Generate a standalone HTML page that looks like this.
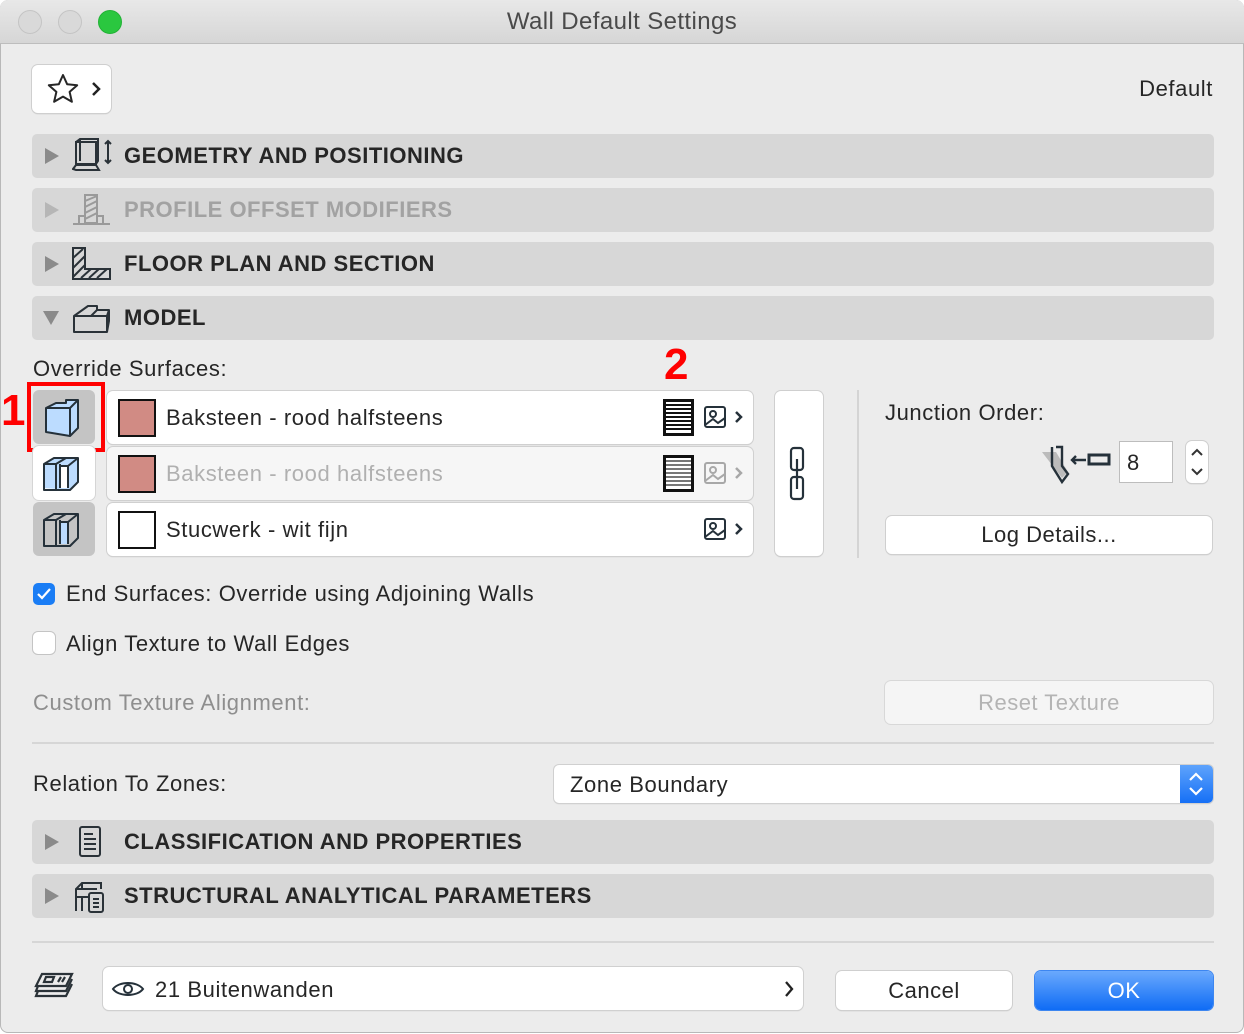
<!DOCTYPE html>
<html><head><meta charset="utf-8"><style>
*{box-sizing:border-box;margin:0;padding:0}
body{width:1244px;height:1034px;background:#fff;font-family:"Liberation Sans",sans-serif;color:#262626;position:relative;overflow:hidden}
.win{position:absolute;left:0;top:0;width:1244px;height:1033px;background:#ececec;box-shadow:inset 0 0 0 1px #b8b8b8;border-radius:8px;overflow:hidden}
.title{position:absolute;left:0;top:0;width:100%;height:44px;background:linear-gradient(#e8e8e8,#d6d6d6);border-bottom:1px solid #bdbdbd;text-align:center;font-size:24px;letter-spacing:.4px;line-height:44px;color:#4a4a4a}
.dot{position:absolute;top:10px;width:24px;height:24px;border-radius:50%;background:#d9d9d9;border:1px solid #c4c4c4}
.a{position:absolute}
.bar{position:absolute;left:32px;width:1182px;height:44px;background:#d7d7d7;border-radius:5px}
.bar .tri{position:absolute;left:13px;top:14px;width:0;height:0;border-left:14px solid #8a8a8a;border-top:8px solid transparent;border-bottom:8px solid transparent}
.bar .t{position:absolute;left:92px;top:0;line-height:44px;font-weight:bold;font-size:22px;letter-spacing:.5px;color:#262626}
.bar svg{position:absolute;left:40px;top:3px}
.txt{position:absolute;font-size:22px;letter-spacing:.6px;white-space:nowrap}
.field{position:absolute;background:#fff;border-radius:6px;box-shadow:0 0 0 1px #d0d0d0,0 1px 1px #bdbdbd}
.sw{position:absolute;left:11px;top:8px;width:38px;height:38px;border:2px solid #111}
.btn{position:absolute;background:#fff;border-radius:6px;box-shadow:0 0 0 1px #cfcfcf,0 1px 1px #b0b0b0;text-align:center;font-size:22px;letter-spacing:.5px}
</style></head><body>
<div class="win">
<div class="title">Wall Default Settings
<div class="dot" style="left:18px"></div><div class="dot" style="left:58px"></div><div class="dot" style="left:98px;background:#2ac73f;border-color:#22b236"></div></div>

<div class="btn" style="left:32px;top:65px;width:79px;height:48px">
<svg class="a" style="left:14px;top:7px" width="34" height="34" viewBox="0 0 34 34"><path d="M17 3l4.2 9.3 10 .9-7.6 6.7 2.3 9.9L17 24.6 8.1 29.8l2.3-9.9-7.6-6.7 10-.9z" fill="none" stroke="#262626" stroke-width="2" stroke-linejoin="round"/></svg>
<svg class="a" style="left:58px;top:16px" width="12" height="16"><path d="M3 2l6 6-6 6" fill="none" stroke="#222" stroke-width="2.5"/></svg></div>
<div class="txt" style="right:31px;top:76px">Default</div>

<div class="bar" style="top:134px"><div class="tri"></div>
<svg width="40" height="38"><g fill="none" stroke="#2a3238" stroke-width="2"><rect x="4" y="5" width="20" height="22"/><path d="M4 5l4-3h18v22l-2 3M8 2v22"/><path d="M1 32l3-4h20l3 5H4z"/><path d="M36 4v22M33 7l3-3 3 3M33 23l3 3 3-3"/></g></svg>
<div class="t">GEOMETRY AND POSITIONING</div></div>

<div class="bar" style="top:188px"><div class="tri" style="border-left-color:#b6b6b6"></div>
<svg width="40" height="38"><g fill="none" stroke="#9a9a9a" stroke-width="2"><rect x="13" y="4" width="12" height="28"/><path d="M13 10l12-5M13 16l12-6M13 22l12-6M13 28l12-6"/><path d="M7 32v-7h6M25 25h6v7M1 33h37"/></g></svg>
<div class="t" style="color:#a2a2a2">PROFILE OFFSET MODIFIERS</div></div>

<div class="bar" style="top:242px"><div class="tri"></div>
<svg width="40" height="38"><g fill="none" stroke="#2a3238" stroke-width="2"><path d="M1 3h12v21h25v10H1z"/><path d="M1 13l10-9M1 23l12-12M1 32l12-12M9 33l10-9M17 33l10-9M25 33l10-9"/></g></svg>
<div class="t">FLOOR PLAN AND SECTION</div></div>

<div class="bar" style="top:296px"><div style="position:absolute;left:11px;top:15px;border-top:14px solid #8a8a8a;border-left:8px solid transparent;border-right:8px solid transparent"></div>
<svg width="40" height="38"><g fill="none" stroke="#2a3238" stroke-width="2" stroke-linejoin="round"><path d="M2 17l14-10h9v4h12v11L35 33H2zM2 17h33v16M35 17l2-6M25 11l-6 6"/></g></svg>
<div class="t">MODEL</div></div>

<div class="txt" style="left:33px;top:356px">Override Surfaces:</div>
<div class="a" style="left:664px;top:340px;color:#ff0000;font-weight:bold;font-size:44px">2</div>
<div class="a" style="left:1px;top:386px;color:#ff0000;font-weight:bold;font-size:44px">1</div>

<div class="a" style="left:33px;top:390px;width:62px;height:54px;background:#c4c4c4;border-radius:6px"></div>
<div class="a" style="left:27px;top:382px;width:78px;height:70px;border:4px solid #ff0000"></div>
<svg class="a" style="left:42px;top:398px" width="44" height="40"><path d="M4 10l10-5h10v-3h12v28l-8 8L4 34z" fill="#bcdcff"/><g fill="none" stroke="#25313a" stroke-width="2" stroke-linejoin="round"><path d="M4 10l10-5h10v-3h12v28l-8 8L4 34z"/><path d="M4 10h24v28M28 10l8-8"/></g></svg>
<div class="a" style="left:33px;top:446px;width:62px;height:54px;background:#fff;border-radius:6px;box-shadow:0 0 0 1px #d5d5d5"></div>
<svg class="a" style="left:42px;top:452px" width="44" height="42"><path d="M2 12l10-6h24v24l-8 8-26-2z" fill="#bcdcff"/><path d="M18 14h8v22h-8z" fill="#fff"/><g fill="none" stroke="#25313a" stroke-width="2" stroke-linejoin="round"><path d="M2 12l10-6h24v24l-8 8H2z"/><path d="M2 12h12v26M14 12l10-6M18 12v24M18 14h8v22M26 14l10-8"/></g></svg>
<div class="a" style="left:33px;top:502px;width:62px;height:54px;background:#c4c4c4;border-radius:6px"></div>
<svg class="a" style="left:42px;top:508px" width="44" height="42"><path d="M18 14h8v22h-8z" fill="#bcdcff"/><g fill="none" stroke="#25313a" stroke-width="2" stroke-linejoin="round"><path d="M2 12l10-6h24v24l-8 8H2z"/><path d="M2 12h12v26M14 12l10-6M18 12v24M18 14h8v22M26 14l10-8"/></g></svg>

<div class="field" style="left:107px;top:391px;width:646px;height:53px"><div class="sw" style="background:#d18b84"></div><div class="txt" style="left:59px;top:14px">Baksteen - rood halfsteens</div>
<svg class="a" style="left:556px;top:8px" width="90" height="38"><rect x="1.5" y="1.5" width="28" height="34" fill="#fff" stroke="#111" stroke-width="3"/><path d="M3 6h25M3 10h25M3 14h25M3 18h25M3 22h25M3 26h25M3 30h25" stroke="#111" stroke-width="2"/><g fill="none" stroke="#25313a" stroke-width="2"><rect x="42" y="8" width="20" height="20" rx="2"/><circle cx="50" cy="15" r="3"/><path d="M42 26l8-6 5 4 7-5"/><path d="M73 13l5 5-5 5" stroke-width="2.5"/></g></svg></div>
<div class="field" style="left:107px;top:447px;width:646px;height:53px;background:#f6f6f6"><div class="sw" style="background:#d18b84"></div><div class="txt" style="left:59px;top:14px;color:#b0b0b0">Baksteen - rood halfsteens</div>
<svg class="a" style="left:556px;top:8px" width="90" height="38"><rect x="1.5" y="1.5" width="28" height="34" fill="#fff" stroke="#111" stroke-width="3"/><path d="M3 6h25M3 10h25M3 14h25M3 18h25M3 22h25M3 26h25M3 30h25" stroke="#777" stroke-width="2"/><g fill="none" stroke="#a8a8a8" stroke-width="2"><rect x="42" y="8" width="20" height="20" rx="2"/><circle cx="50" cy="15" r="3"/><path d="M42 26l8-6 5 4 7-5"/><path d="M73 13l5 5-5 5" stroke-width="2.5"/></g></svg></div>
<div class="field" style="left:107px;top:503px;width:646px;height:53px"><div class="sw" style="background:#fff"></div><div class="txt" style="left:59px;top:14px">Stucwerk - wit fijn</div>
<svg class="a" style="left:556px;top:8px" width="90" height="38"><g fill="none" stroke="#25313a" stroke-width="2"><rect x="42" y="8" width="20" height="20" rx="2"/><circle cx="50" cy="15" r="3"/><path d="M42 26l8-6 5 4 7-5"/><path d="M73 13l5 5-5 5" stroke-width="2.5"/></g></svg></div>

<div class="btn" style="left:775px;top:391px;width:48px;height:165px">
<svg class="a" style="left:13px;top:54px" width="22" height="58"><g fill="none" stroke="#25313a" stroke-width="2.2"><rect x="3" y="3" width="12" height="22" rx="3"/><rect x="3" y="32" width="12" height="22" rx="3"/><path d="M9 14v30"/></g></svg></div>
<div class="a" style="left:857px;top:390px;width:2px;height:168px;background:#d4d4d4"></div>

<div class="txt" style="left:885px;top:400px">Junction Order:</div>
<svg class="a" style="left:1040px;top:444px" width="72" height="44"><path d="M2 8h14l12 20-6 6z" fill="#bbb"/><g fill="none" stroke="#25313a" stroke-width="2.4"><path d="M16 3h6v19l6 8-6 8-10-16V3"/><path d="M46 16H32M36 12l-4 4 4 4"/></g><rect x="49" y="11" width="20" height="9" fill="none" stroke="#25313a" stroke-width="3"/></svg>
<div class="a" style="left:1119px;top:441px;width:54px;height:42px;background:#fff;border:1px solid #bdbdbd;font-size:22px;padding:8px 0 0 7px">8</div>
<div class="btn" style="left:1186px;top:441px;width:22px;height:42px"><svg class="a" style="left:4px;top:7px" width="14" height="28"><path d="M2 7l5-5 5 5M2 21l5 5 5-5" fill="none" stroke="#333" stroke-width="2"/></svg></div>

<div class="btn" style="left:886px;top:516px;width:326px;height:38px;line-height:38px">Log Details...</div>

<div class="a" style="left:33px;top:583px;width:22px;height:22px;background:#1a7df5;border-radius:5px"><svg width="22" height="22"><path d="M5 11l4 4 8-9" fill="none" stroke="#fff" stroke-width="2.2"/></svg></div>
<div class="txt" style="left:66px;top:581px">End Surfaces: Override using Adjoining Walls</div>
<div class="a" style="left:33px;top:632px;width:22px;height:22px;background:#fff;border-radius:5px;box-shadow:0 0 0 1px #c4c4c4"></div>
<div class="txt" style="left:66px;top:631px">Align Texture to Wall Edges</div>

<div class="txt" style="left:33px;top:690px;color:#8e8e8e">Custom Texture Alignment:</div>
<div class="btn" style="left:885px;top:681px;width:328px;height:43px;line-height:43px;background:#f5f5f5;color:#b4b4b4;box-shadow:0 0 0 1px #d8d8d8">Reset Texture</div>

<div class="a" style="left:32px;top:742px;width:1182px;height:2px;background:#d6d6d6"></div>
<div class="txt" style="left:33px;top:771px">Relation To Zones:</div>
<div class="field" style="left:554px;top:765px;width:659px;height:38px;border-radius:5px;overflow:hidden"><div class="txt" style="left:16px;top:7px">Zone Boundary</div>
<div class="a" style="right:0;top:0;width:33px;height:38px;background:linear-gradient(#5ea3fc,#1670f6)"><svg width="33" height="38"><path d="M10 15l6-6 6 6M10 23l6 6 6-6" fill="none" stroke="#fff" stroke-width="2.2"/></svg></div></div>

<div class="bar" style="top:820px"><div class="tri"></div>
<svg width="40" height="38"><g fill="none" stroke="#2a3238" stroke-width="2"><rect x="8" y="4" width="20" height="29" rx="2"/><path d="M12 11h9M12 16h12M12 21h12M12 26h12"/></g></svg>
<div class="t">CLASSIFICATION AND PROPERTIES</div></div>
<div class="bar" style="top:874px"><div class="tri"></div>
<svg width="40" height="38"><g fill="none" stroke="#2a3238" stroke-width="2"><path d="M4 34V12l6-6h19v6M4 12h21M10 6v6M4 20h12M10 20v14"/><rect x="17" y="16" width="14" height="19" rx="2"/><path d="M21 22h6M21 26h6M21 30h6"/></g></svg>
<div class="t">STRUCTURAL ANALYTICAL PARAMETERS</div></div>

<div class="a" style="left:32px;top:941px;width:1182px;height:2px;background:#d6d6d6"></div>

<svg class="a" style="left:34px;top:970px" width="40" height="36"><g fill="none" stroke="#2a3238" stroke-width="2.2"><path d="M8 4h30l-6 12H2z"/><path d="M4 16l-2 5h30l6-12"/><path d="M4 21l-2 5h30l6-12"/><path d="M10 12l2-5h8l-2 5zM24 12l3-5M28 12l3-5"/></g></svg>
<div class="field" style="left:103px;top:967px;width:700px;height:43px"><svg class="a" style="left:8px;top:11px" width="36" height="22"><path d="M2 11C8 3 26 3 32 11C26 19 8 19 2 11z" fill="none" stroke="#25313a" stroke-width="2"/><circle cx="17" cy="11" r="4" fill="none" stroke="#25313a" stroke-width="2"/></svg><div class="txt" style="left:52px;top:10px">21 Buitenwanden</div>
<svg class="a" style="left:680px;top:13px" width="12" height="18"><path d="M3 2l6 7-6 7" fill="none" stroke="#222" stroke-width="2.3"/></svg></div>
<div class="btn" style="left:836px;top:971px;width:176px;height:39px;line-height:39px">Cancel</div>
<div class="btn" style="left:1035px;top:971px;width:178px;height:39px;line-height:39px;background:linear-gradient(#6aa9fd,#0f6cf5);color:#fff;box-shadow:0 0 0 1px #3d86f0">OK</div>
</div>
</body></html>
